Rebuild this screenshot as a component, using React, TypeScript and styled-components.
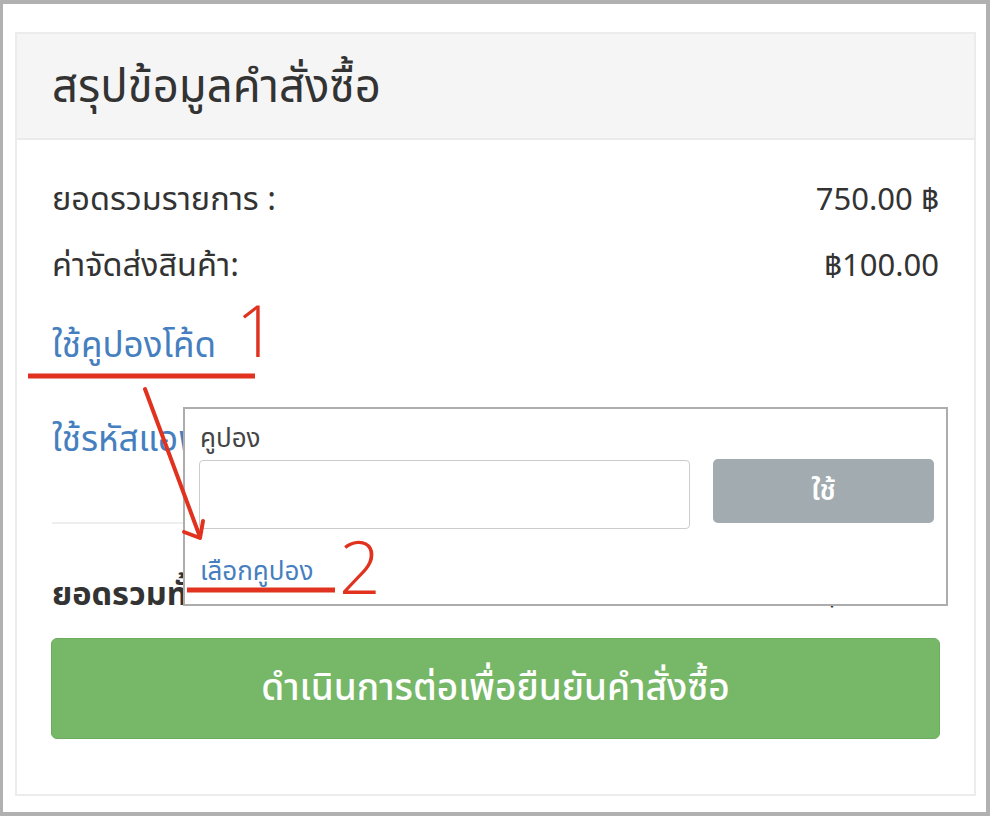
import React from 'react';
import styled, { createGlobalStyle } from 'styled-components';

const Global = createGlobalStyle`
  html, body { margin: 0; padding: 0; background: #fff; }
  body { font-family: "Noto Sans", "Noto Sans Thai", "DejaVu Sans", sans-serif; color: #333; }
  * { box-sizing: border-box; }
`;

const Page = styled.div`
  position: relative;
  width: 990px;
  height: 816px;
`;

const Frame = styled.div`
  width: 990px;
  height: 816px;
  border-style: solid;
  border-color: #b1b1b1;
  border-width: 4px 4px 4px 3px;
  padding: 28px 10px 0 12px;
  background: #fff;
`;

const Card = styled.div`
  position: relative;
  width: 961px;
  height: 764px;
  border: 2px solid #ececec;
  background: #fff;
  display: flex;
  flex-direction: column;
`;

const Header = styled.div`
  height: 106px;
  background: #f5f5f5;
  border-bottom: 2px solid #eaeaea;
  display: flex;
  align-items: center;
  padding: 0 35px 2px;
`;

const Title = styled.h2`
  margin: 0;
  font-size: 45.5px;
  font-weight: 400;
  color: #333;
  line-height: 1;
`;

const Body = styled.div`
  padding: 0 35px;
  display: flex;
  flex-direction: column;
`;

const Row = styled.div<{ $mt?: number; $bold?: boolean }>`
  height: 52px;
  margin-top: ${p => p.$mt ?? 0}px;
  display: flex;
  align-items: center;
  justify-content: space-between;
  font-weight: ${p => (p.$bold ? 700 : 400)};
  color: #333;
`;

const Label = styled.span`
  font-size: 32.5px;
`;

const Value = styled.span`
  font-size: 31px;
`;

const LinkRow = styled.a<{ $mt: number }>`
  display: flex;
  align-items: center;
  height: 52px;
  margin-top: ${p => p.$mt}px;
  font-size: 35px;
  color: #467fc0;
  text-decoration: none;
`;

const Divider = styled.hr<{ $mt: number }>`
  margin: ${p => p.$mt}px 0 0;
  border: 0;
  border-top: 2px solid #eeeeee;
`;

const ConfirmButton = styled.button`
  margin: 17px -1px 0;
  height: 101px;
  border: 1px solid #6cad5d;
  border-radius: 6px;
  background: #77b768;
  color: #fff;
  font-family: inherit;
  font-size: 37px;
  font-weight: 500;
`;

const Popover = styled.div`
  position: absolute;
  left: 166px;
  top: 373px;
  width: 765px;
  height: 199px;
  background: #fff;
  border: 2px solid #adadad;
  padding: 12px 12px 0 14px;
  display: flex;
  flex-direction: column;
`;

const PopLabel = styled.div`
  height: 32px;
  line-height: 32px;
  font-size: 26px;
  color: #444;
  padding-left: 1px;
`;

const PopRow = styled.div`
  margin-top: 7px;
  display: flex;
  align-items: flex-start;
  gap: 23px;
`;

const CodeInput = styled.input`
  width: 491px;
  height: 69px;
  border: 1px solid #cccccc;
  border-radius: 4px;
  background: #fff;
  font-family: inherit;
  font-size: 24px;
  padding: 0 12px;
`;

const ApplyButton = styled.button`
  margin-top: -1px;
  width: 221px;
  height: 64px;
  border: 0;
  border-radius: 5px;
  background: #a1abb0;
  color: #fff;
  font-family: inherit;
  font-size: 28px;
  font-weight: 600;
`;

const PopLink = styled.a`
  margin-top: 26px;
  height: 30px;
  line-height: 30px;
  font-size: 26px;
  color: #467fc0;
  text-decoration: none;
  padding-left: 1px;
`;

const Annotations = styled.svg`
  position: absolute;
  left: 0;
  top: 0;
  pointer-events: none;
`;

const Marker = styled.span<{ $x: number; $y: number; $size: number }>`
  position: absolute;
  left: ${p => p.$x}px;
  top: ${p => p.$y}px;
  font-family: "Open Sans", "Liberation Sans", Arial, sans-serif;
  font-weight: 300;
  font-size: ${p => p.$size}px;
  line-height: 1;
  color: #e0321f;
  pointer-events: none;
`;

export default function App() {
  return (
    <Page>
      <Global />
      <Frame>
        <Card>
          <Header>
            <Title>สรุปข้อมูลคำสั่งซื้อ</Title>
          </Header>
          <Body>
            <Row $mt={34}>
              <Label>ยอดรวมรายการ :</Label>
              <Value>750.00 ฿</Value>
            </Row>
            <Row $mt={14}>
              <Label>ค่าจัดส่งสินค้า:</Label>
              <Value>฿100.00</Value>
            </Row>
            <LinkRow $mt={28} href="#">ใช้คูปองโค้ด</LinkRow>
            <LinkRow $mt={42} href="#">ใช้รหัสแอฟฟิลิเอท</LinkRow>
            <Divider $mt={56} />
            <Row $mt={45} $bold>
              <Label>ยอดรวมทั้งหมด</Label>
              <Value>฿850.00</Value>
            </Row>
            <ConfirmButton>ดำเนินการต่อเพื่อยืนยันคำสั่งซื้อ</ConfirmButton>
          </Body>
          <Popover>
            <PopLabel>คูปอง</PopLabel>
            <PopRow>
              <CodeInput />
              <ApplyButton>ใช้</ApplyButton>
            </PopRow>
            <PopLink href="#">เลือกคูปอง</PopLink>
          </Popover>
        </Card>
      </Frame>
      <Annotations width="990" height="816" viewBox="0 0 990 816">
        <line x1="28" y1="376" x2="255" y2="376" stroke="#e0321f" strokeWidth="5" />
        <line x1="187" y1="590" x2="335" y2="590" stroke="#e0321f" strokeWidth="5" />
        <line x1="145" y1="389" x2="200" y2="537" stroke="#e0321f" strokeWidth="4" strokeLinecap="round" />
        <polyline points="184,532 200,538 203,521" fill="none" stroke="#e0321f" strokeWidth="4" strokeLinecap="round" strokeLinejoin="round" />
      </Annotations>
      <Marker $x={236} $y={294} $size={71}>1</Marker>
      <Marker $x={339} $y={529} $size={73}>2</Marker>
    </Page>
  );
}
